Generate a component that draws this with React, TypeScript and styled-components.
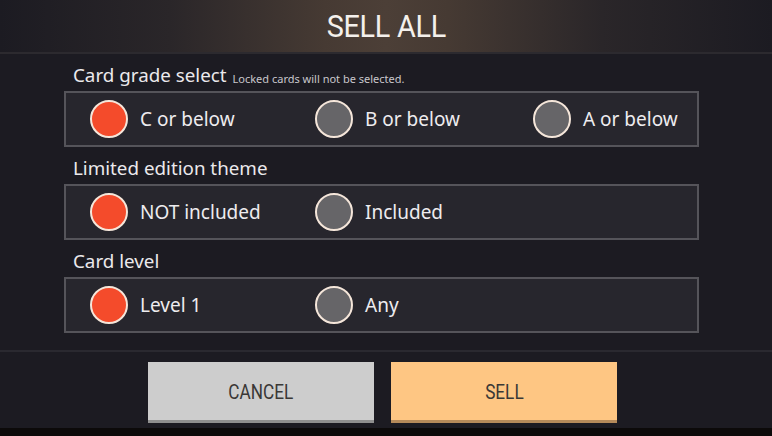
import React from 'react'
import styled, {createGlobalStyle} from 'styled-components'

const GlobalStyle = createGlobalStyle`
  html, body {
    margin: 0;
    padding: 0;
    background: #1c1b22;
  }
  body {
    font-family: "Noto Sans", "Open Sans", sans-serif;
  }
`

type Option = { label: string; checked?: boolean }
type Group = { title: string; note?: string; options: Option[] }

const groups: Group[] = [
    {
        title: 'Card grade select',
        note: 'Locked cards will not be selected.',
        options: [{label: 'C or below', checked: true}, {label: 'B or below'}, {label: 'A or below'}],
    },
    {
        title: 'Limited edition theme',
        options: [{label: 'NOT included', checked: true}, {label: 'Included'}],
    },
    {
        title: 'Card level',
        options: [{label: 'Level 1', checked: true}, {label: 'Any'}],
    },
]

export default function App() {
    return (
        <>
            <GlobalStyle/>
            <ScreenL>
                <HeaderL>
                    <TitleL>SELL ALL</TitleL>
                </HeaderL>
                <BodyL>
                    {groups.map(group => (
                        <SectionL key={group.title}>
                            <LabelL>
                                {group.title}
                                {group.note && <NoteL>{group.note}</NoteL>}
                            </LabelL>
                            <BoxL>
                                {group.options.map(option => (
                                    <OptionL key={option.label}>
                                        <RadioL $checked={!!option.checked}/>
                                        <OptionTextL>{option.label}</OptionTextL>
                                    </OptionL>
                                ))}
                            </BoxL>
                        </SectionL>
                    ))}
                </BodyL>
                <FooterL>
                    <ButtonL $variant="cancel"><ButtonTextL>CANCEL</ButtonTextL></ButtonL>
                    <ButtonL $variant="sell"><ButtonTextL>SELL</ButtonTextL></ButtonL>
                </FooterL>
                <BottomStripL/>
            </ScreenL>
        </>
    )
}

// Styles
const ScreenL = styled.div`
  width: 772px;
  height: 436px;
  display: flex;
  flex-direction: column;
  background: #1c1b22;
  overflow: hidden;
`

const HeaderL = styled.header`
  height: 52px;
  display: flex;
  align-items: center;
  justify-content: center;
  background: linear-gradient(90deg, #1c1b22 0%, #2a2629 22%, #463a33 42%, #4c3f37 50%, #463a33 58%, #2a2629 78%, #1c1b22 100%);
  border-bottom: 2px solid #2c2a2f;
`

const TitleL = styled.h1`
  margin: 0;
  font-family: "Roboto", "Noto Sans", sans-serif;
  font-weight: 400;
  font-size: 32px;
  letter-spacing: -0.3px;
  color: #f4f0ec;
  transform: scaleX(0.9);
`

const BodyL = styled.main`
  padding-left: 64px;
  width: 635px;
`

const SectionL = styled.section`
  display: flex;
  flex-direction: column;
`

const LabelL = styled.div`
  height: 37px;
  box-sizing: border-box;
  padding: 0 0 3px 9px;
  display: flex;
  align-items: flex-end;
  gap: 6px;
  font-size: 18.8px;
  color: #ebe9ec;
  white-space: nowrap;
`

const NoteL = styled.span`
  font-size: 11px;
  color: #c9c7cc;
  padding-bottom: 2px;
`

const BoxL = styled.div`
  height: 56px;
  box-sizing: border-box;
  border: 2px solid #55545a;
  background: #27262d;
  padding-left: 24px;
  display: grid;
  grid-template-columns: 225px 218px 1fr;
  align-items: center;
`

const OptionL = styled.div`
  display: flex;
  align-items: center;
  gap: 12px;
`

const RadioL = styled.span<{ $checked: boolean }>`
  width: 34px;
  height: 34px;
  border-radius: 50%;
  border: 2px solid #f5e6da;
  background: ${({$checked}) => ($checked ? '#f44b2b' : '#666568')};
  flex: none;
`

const OptionTextL = styled.span`
  font-size: 19px;
  color: #eeecef;
`

const FooterL = styled.footer`
  margin-top: 17px;
  border-top: 2px solid #2a2930;
  height: 78px;
  box-sizing: border-box;
  padding: 10px 0 0 148px;
  display: flex;
  gap: 17px;
`

const ButtonL = styled.button<{ $variant: 'cancel' | 'sell' }>`
  width: 226px;
  height: 61px;
  border: none;
  border-radius: 0;
  border-bottom: 3px solid ${({$variant}) => ($variant === 'sell' ? '#b58a5a' : '#8f8f8f')};
  background: ${({$variant}) => ($variant === 'sell' ? '#fec683' : '#cdcdcd')};
  padding: 2px 0 0;
  display: flex;
  align-items: center;
  justify-content: center;
`

const ButtonTextL = styled.span`
  font-family: "Roboto", "Noto Sans", sans-serif;
  font-size: 20px;
  color: #3a3836;
  transform: scaleX(0.86);
`

const BottomStripL = styled.div`
  flex: 1;
  background: #0c0a0a;
`
